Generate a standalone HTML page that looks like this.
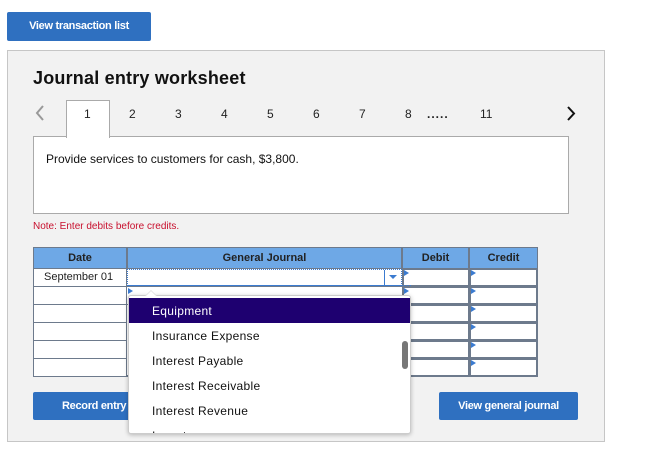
<!DOCTYPE html>
<html><head><style>
*{box-sizing:border-box;margin:0;padding:0}
body{width:671px;height:458px;background:#fff;font-family:"Liberation Sans",Arial,sans-serif;position:relative;overflow:hidden}
.abs{position:absolute}
.btn{background:#2f70c0;color:#fff;font-weight:bold;font-size:11px;text-align:center;border-radius:2px;letter-spacing:-0.3px}
.tab{position:absolute;top:107px;font-size:12px;color:#222}
.cell{position:absolute;background:#fff}
.tri{position:absolute;width:0;height:0;border-top:3px solid transparent;border-bottom:3px solid transparent;border-left:5px solid #3b7bd0}
.item{position:absolute;left:23px;font-size:12px;color:#111;letter-spacing:0.3px}
</style></head><body>
<div class="abs btn" style="left:7px;top:12px;width:144px;height:29px;line-height:29px">View transaction list</div>
<div class="abs" style="left:7px;top:50px;width:598px;height:392px;background:#f2f2f2;border:1px solid #c6c6c6"></div>
<div class="abs" style="left:33px;top:68px;font-size:18px;font-weight:bold;color:#111;letter-spacing:0.2px">Journal entry worksheet</div>
<svg class="abs" style="left:34px;top:104px" width="12" height="18"><polyline points="9,2 3,9 9,16" fill="none" stroke="#999" stroke-width="2"/></svg>
<svg class="abs" style="left:565px;top:104px" width="12" height="18"><polyline points="3,3 9,9.5 3,16" fill="none" stroke="#111" stroke-width="2"/></svg>
<div class="abs" style="left:33px;top:136px;width:536px;height:78px;background:#fff;border:1px solid #aaa"></div>
<div class="abs" style="left:66px;top:100px;width:44px;height:38px;background:#fff;border:1px solid #aaa;border-bottom:none"></div>
<div class="tab" style="left:84px">1</div>
<div class="tab" style="left:129px">2</div>
<div class="tab" style="left:175px">3</div>
<div class="tab" style="left:221px">4</div>
<div class="tab" style="left:267px">5</div>
<div class="tab" style="left:313px">6</div>
<div class="tab" style="left:359px">7</div>
<div class="tab" style="left:405px">8</div>
<div class="tab" style="left:427px;font-weight:bold;letter-spacing:1px">.....</div>
<div class="tab" style="left:480px">11</div>
<div class="abs" style="left:46px;top:152px;font-size:12px;color:#111">Provide services to customers for cash, $3,800.</div>
<div class="abs" style="left:33px;top:221px;font-size:10px;color:#c8102e">Note: Enter debits before credits.</div>
<div class="abs" style="left:33px;top:247px;width:505px;height:130px;background:#6d7a8c"></div>
<div class="abs" style="left:34px;top:248px;width:92px;height:20px;background:#6ea8e6;font-size:11px;font-weight:bold;text-align:center;line-height:20px;color:#222">Date</div>
<div class="abs" style="left:128px;top:248px;width:273px;height:20px;background:#6ea8e6;font-size:11px;font-weight:bold;text-align:center;line-height:20px;color:#222">General Journal</div>
<div class="abs" style="left:403px;top:248px;width:65px;height:20px;background:#6ea8e6;font-size:11px;font-weight:bold;text-align:center;line-height:20px;color:#222">Debit</div>
<div class="abs" style="left:470px;top:248px;width:67px;height:20px;background:#6ea8e6;font-size:11px;font-weight:bold;text-align:center;line-height:20px;color:#222">Credit</div>
<div class="cell" style="left:34px;top:269px;width:92px;height:17px;font-size:11px;padding-left:10px;line-height:17px;color:#222">September 01</div>
<div class="cell" style="left:34px;top:287px;width:92px;height:17px"></div>
<div class="cell" style="left:34px;top:305px;width:92px;height:17px"></div>
<div class="cell" style="left:34px;top:323px;width:92px;height:17px"></div>
<div class="cell" style="left:34px;top:341px;width:92px;height:17px"></div>
<div class="cell" style="left:34px;top:359px;width:92px;height:17px"></div>
<div class="cell" style="left:127px;top:269px;width:275px;height:17px;border:1px dotted #3b7bd0"></div>
<div class="abs" style="left:384px;top:270px;width:1px;height:15px;background:#3b7bd0"></div>
<div class="abs" style="left:389px;top:275px;width:0;height:0;border-left:4px solid transparent;border-right:4px solid transparent;border-top:4px solid #3b7bd0"></div>
<div class="cell" style="left:127px;top:287px;width:275px;height:17px"></div>
<div class="cell" style="left:127px;top:305px;width:275px;height:70px"></div>
<div class="cell" style="left:404px;top:270px;width:64px;height:15px"></div>
<div class="cell" style="left:404px;top:288px;width:64px;height:15px"></div>
<div class="cell" style="left:404px;top:306px;width:64px;height:15px"></div>
<div class="cell" style="left:404px;top:324px;width:64px;height:15px"></div>
<div class="cell" style="left:404px;top:342px;width:64px;height:15px"></div>
<div class="cell" style="left:404px;top:360px;width:64px;height:15px"></div>
<div class="cell" style="left:471px;top:270px;width:65px;height:15px"></div>
<div class="cell" style="left:471px;top:288px;width:65px;height:15px"></div>
<div class="cell" style="left:471px;top:306px;width:65px;height:15px"></div>
<div class="cell" style="left:471px;top:324px;width:65px;height:15px"></div>
<div class="cell" style="left:471px;top:342px;width:65px;height:15px"></div>
<div class="cell" style="left:471px;top:360px;width:65px;height:15px"></div>
<div class="tri" style="left:404px;top:270px"></div><div class="tri" style="left:471px;top:270px"></div>
<div class="tri" style="left:404px;top:288px"></div><div class="tri" style="left:471px;top:288px"></div>
<div class="tri" style="left:471px;top:306px"></div><div class="tri" style="left:471px;top:324px"></div>
<div class="tri" style="left:471px;top:342px"></div><div class="tri" style="left:471px;top:360px"></div>
<div class="tri" style="left:128px;top:288px"></div>
<div class="abs btn" style="left:33px;top:392px;width:110px;height:28px;line-height:28px;text-align:left;padding-left:29px">Record entry</div>
<div class="abs btn" style="left:439px;top:392px;width:139px;height:28px;line-height:28px">View general journal</div>
<div class="abs" style="left:128px;top:295px;width:283px;height:139px;background:#fff;border:1px solid #ccc;border-radius:3px;box-shadow:0 1px 4px rgba(0,0,0,.25);overflow:hidden">
<div class="abs" style="left:0;top:2px;width:282px;height:25px;background:#1e0070"></div>
<div class="item" style="top:8px;color:#fff">Equipment</div>
<div class="item" style="top:33px">Insurance Expense</div>
<div class="item" style="top:58px">Interest Payable</div>
<div class="item" style="top:83px">Interest Receivable</div>
<div class="item" style="top:108px">Interest Revenue</div>
<div class="item" style="top:133px">Inventory</div>
<div class="abs" style="left:273px;top:45px;width:6px;height:28px;background:#777;border-radius:3px"></div>
</div>
<div class="abs" style="left:128px;top:285px;width:283px;height:1px;border-top:1px dotted #3b7bd0"></div>
<div class="abs" style="left:145px;top:290px;width:0;height:0;border-left:6px solid transparent;border-right:6px solid transparent;border-bottom:6px solid #ddd"></div>
<div class="abs" style="left:146px;top:291px;width:0;height:0;border-left:5px solid transparent;border-right:5px solid transparent;border-bottom:5px solid #fff"></div>
</body></html>
